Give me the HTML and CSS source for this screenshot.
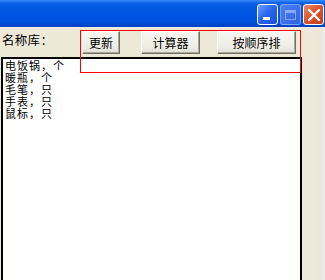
FILE: index.html
```html
<!DOCTYPE html>
<html lang="zh-CN">
<head>
  <meta charset="UTF-8">
  <title>名称库</title>
  <link rel="stylesheet" href="styles.css">
</head>
<body>
  <div class="titlebar">
    <span class="winbtn min"><span class="min-bar"></span></span>
    <span class="winbtn max disabled"><span class="max-box"></span></span>
    <span class="winbtn close">
      <svg width="14" height="14" viewBox="0 0 14 14">
        <path d="M2 2 L12 12 M12 2 L2 12" stroke="#fff" stroke-width="2.4" stroke-linecap="round"/>
      </svg>
    </span>
  </div>
  <div class="window">
    <div class="toolbar">
      <span class="label">名称库：</span>
      <div class="buttons">
        <button class="btn btn-update">更新</button>
        <button class="btn btn-calc">计算器</button>
        <button class="btn btn-sort">按顺序排</button>
      </div>
    </div>
    <div class="listbox">
      <div>电饭锅，个</div>
      <div>暖瓶，个</div>
      <div>毛笔，只</div>
      <div>手表，只</div>
      <div>鼠标，只</div>
    </div>
    <div class="frame-edge"></div>
  </div>
  <div class="highlight"></div>
</body>
</html>
```

FILE: styles.css
```css
body {
  margin: 0;
  width: 325px;
  height: 280px;
  overflow: hidden;
  background-color: #ece9d8;
  font-family: "Noto Sans CJK SC", "Liberation Sans", sans-serif;
  font-size: 12px;
  color: #000;
  position: relative;
}

.titlebar {
  height: 27px;
  display: flex;
  justify-content: flex-end;
  align-items: flex-start;
  gap: 2px;
  padding-top: 4px;
  padding-right: 1px;
  box-sizing: border-box;
  background: linear-gradient(to bottom, #3a8cf6 0%, #0a5fe6 12%, #0055e5 50%, #0050dc 85%, #003fbf 100%);
}

.winbtn {
  width: 21px;
  height: 21px;
  box-sizing: border-box;
  border: 1px solid #fff;
  border-radius: 3px;
  display: flex;
  align-items: center;
  justify-content: center;
  position: relative;
}

.min {
  background: linear-gradient(135deg, #6fa2ff 0%, #2a66f0 45%, #1a4fd8 100%);
}

.min-bar {
  width: 7px;
  height: 3px;
  background: #fff;
  position: absolute;
  left: 5px;
  bottom: 4px;
}

.max.disabled {
  border-color: rgba(255, 255, 255, 0.35);
  background: linear-gradient(135deg, #4a7ff0 0%, #2d63e6 100%);
}

.max-box {
  width: 11px;
  height: 10px;
  box-sizing: border-box;
  border: 1px solid rgba(255, 255, 255, 0.4);
  border-top-width: 3px;
}

.close {
  background: linear-gradient(135deg, #f08a6c 0%, #e0542c 45%, #c5391a 100%);
}

.window {
  position: relative;
  height: 253px;
  border-top: 1px solid #f3f1e7;
}

.toolbar {
  display: flex;
  align-items: flex-start;
  height: 29px;
}

.label {
  width: 78px;
  flex-shrink: 0;
  margin-left: 2px;
  margin-top: 4px;
  font-size: 12.5px;
  line-height: 16px;
  letter-spacing: 0.3px;
}

.buttons {
  display: flex;
  margin-left: 2px;
  margin-top: 3px;
}

.btn {
  height: 23px;
  padding: 0;
  font-family: inherit;
  font-size: 12px;
  line-height: 16px;
  color: #000;
  background: linear-gradient(to bottom, #f6f5f0 0%, #eeede5 70%, #e2dfd3 100%);
  border: 1px solid;
  border-color: #fff #716f64 #716f64 #fff;
  box-shadow: inset -1px -1px 0 #aca899;
}

.btn-update {
  width: 38px;
}

.btn-calc {
  width: 59px;
  margin-left: 21px;
}

.btn-sort {
  width: 79px;
  margin-left: 17px;
}

.listbox {
  margin-left: 1px;
  width: 301px;
  height: 230px;
  box-sizing: border-box;
  border: 2px solid #000;
  border-bottom: none;
  background: #fff;
  padding: 1px 0 0 2px;
  font-family: "Liberation Sans", "Noto Sans CJK SC", sans-serif;
  font-size: 11px;
  letter-spacing: 1px;
  line-height: 12px;
}

.frame-edge {
  position: absolute;
  right: 0;
  top: 0;
  bottom: 0;
  width: 10px;
  background: linear-gradient(to right, #ece9d8 0%, #eee6d6 30%, #e8ead4 60%, #f0e6dc 80%, #e6ecf4 100%);
}

.highlight {
  position: absolute;
  left: 80px;
  top: 30px;
  width: 221px;
  height: 43px;
  box-sizing: border-box;
  border: 1px solid #ff0000;
}
```
